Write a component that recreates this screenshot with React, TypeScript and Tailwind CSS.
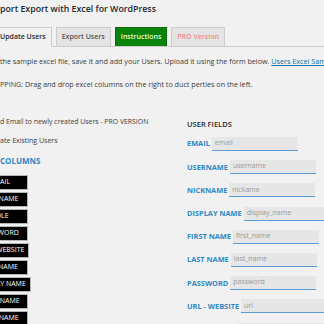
import React from 'react'

const columns = [
  'EMAIL',
  'USERNAME',
  'ROLE',
  'PASSWORD',
  'URL - WEBSITE',
  'NICKNAME',
  'DISPLAY NAME',
  'FIRST NAME',
  'LAST NAME',
]

const fields = [
  { label: 'EMAIL', placeholder: 'email' },
  { label: 'USERNAME', placeholder: 'username' },
  { label: 'NICKNAME', placeholder: 'nickame' },
  { label: 'DISPLAY NAME', placeholder: 'display_name' },
  { label: 'FIRST NAME', placeholder: 'first_name' },
  { label: 'LAST NAME', placeholder: 'last_name' },
  { label: 'PASSWORD', placeholder: 'password' },
  { label: 'URL - WEBSITE', placeholder: 'url' },
  { label: 'DESCRIPTION', placeholder: 'description' },
]

function Tab({ label, className }: { label: string; className: string }) {
  return (
    <div
      className={`flex h-[19px] items-center border border-b-0 px-[5px] text-[7px] font-semibold ${className}`}
    >
      {label}
    </div>
  )
}

export default function App() {
  return (
    <div
      className="h-[324px] w-[324px] overflow-hidden bg-[#f1f1f1] text-[#3c3c3c]"
      style={{ fontFamily: '"Open Sans", "Noto Sans", sans-serif' }}
    >
      <h1 className="h-[18px] whitespace-nowrap text-[8.8px] font-semibold leading-[18px] text-[#23282d]">
        port Export with Excel for WordPress
      </h1>

      <div className="mt-[9px] flex items-end gap-[4px] border-b border-[#ccc] -ml-[6px]">
        <Tab label="Update Users" className="-mb-px h-[20px] border-[#ccc] bg-[#f1f1f1] text-[#23282d]" />
        <Tab label="Export Users" className="border-[#ccc] bg-[#e4e4e4] text-[#555]" />
        <Tab label="Instructions" className="border-[#0a6b0a] bg-[#0a830a] text-[#e6ffd9]" />
        <Tab label="PRO Version" className="border-[#ccc] bg-[#e4e4e4] text-[#f08a8a]" />
      </div>

      <p className="mt-[8px] h-[12px] whitespace-nowrap text-[7.2px] leading-[12px]">
        the sample excel file, save it and add your Users. Upload it using the form below.{' '}
        <span className="text-[#0073aa] underline">Users Excel Sample</span>
      </p>
      <p className="mt-[11px] h-[12px] whitespace-nowrap text-[7.2px] leading-[12px]">
        PPING: Drag and drop excel columns on the right to duct perties on the left.
      </p>

      <div className="mt-[26px] flex">
        <div className="w-[187px] shrink-0">
          <p className="h-[12px] whitespace-nowrap text-[6.9px] leading-[12px]">
            d Email to newly created Users - PRO VERSION
          </p>
          <p className="mt-[7px] h-[12px] whitespace-nowrap text-[7px] leading-[12px]">
            ate Existing Users
          </p>
          <p className="mt-[8px] h-[12px] whitespace-nowrap text-[8px] font-bold leading-[12px] text-[#2e88c5]">
            COLUMNS
          </p>
          <div className="mt-[8px] -ml-[28px] flex flex-col items-start gap-[2px]">
            {columns.map((c) => (
              <div
                key={c}
                className="flex h-[15px] min-w-[56px] items-center justify-center whitespace-nowrap border border-[#b5b5b5] bg-black px-[4px] text-[7px] text-white"
              >
                {c}
              </div>
            ))}
          </div>
        </div>

        <div className="shrink-0">
          <p className="mt-[2px] h-[12px] whitespace-nowrap text-[7.5px] font-semibold leading-[12px] text-[#23282d]">
            USER FIELDS
          </p>
          <div className="mt-[7px] flex flex-col gap-[9.2px]">
            {fields.map((f) => (
              <div key={f.label} className="flex h-[14px] items-center gap-[2px] whitespace-nowrap">
                <span className="text-[7.4px] font-bold text-[#2e88c5]">{f.label}</span>
                <div className="flex h-[14px] w-[86px] shrink-0 items-center border-b border-[#5b9dd9] bg-[#e6e6e6] px-[3px] text-[7px] text-[#999]">
                  {f.placeholder}
                </div>
              </div>
            ))}
          </div>
        </div>
      </div>
    </div>
  )
}
